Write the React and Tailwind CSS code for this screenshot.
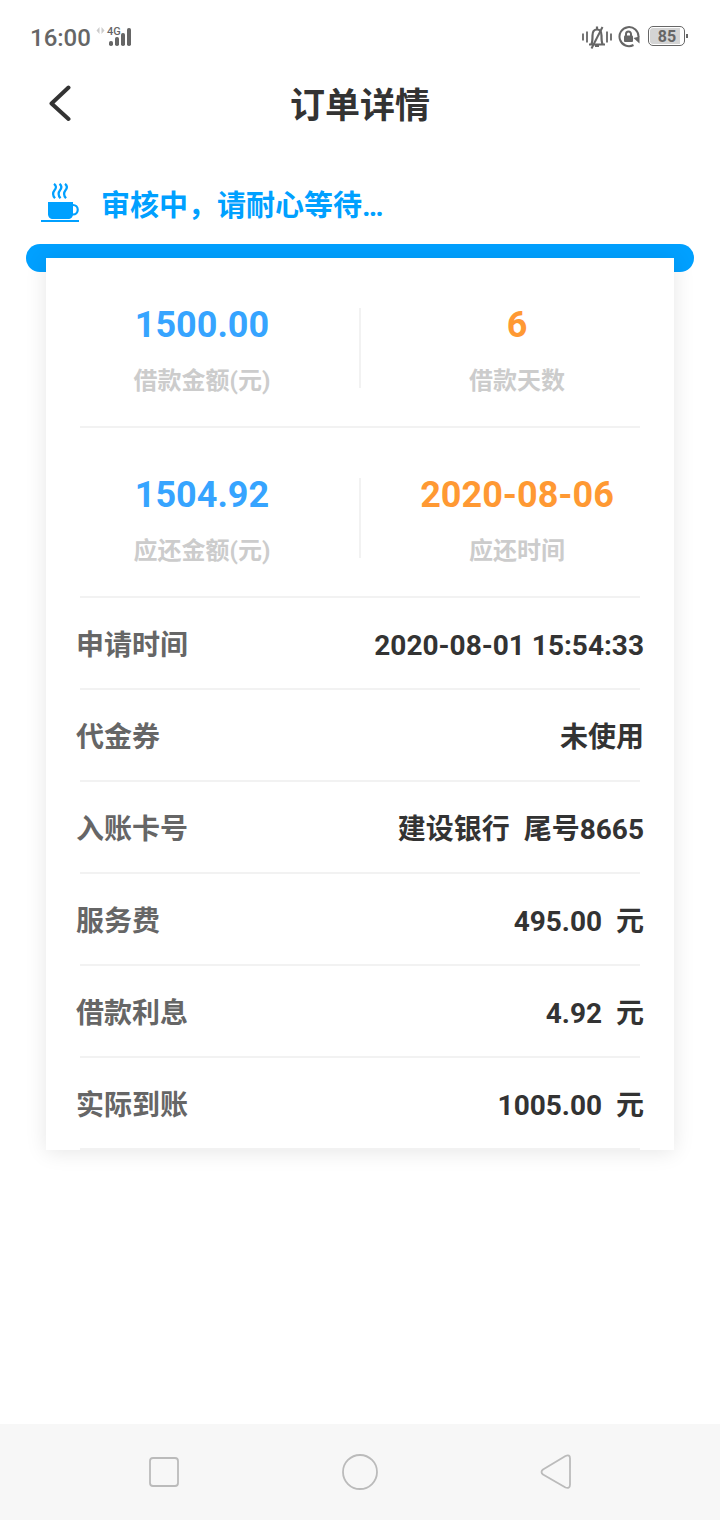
import React from 'react';

const stats = [
  [
    { value: '1500.00', label: '借款金额(元)', color: 'text-[#36a4ff]' },
    { value: '6', label: '借款天数', color: 'text-[#ff9933]' },
  ],
  [
    { value: '1504.92', label: '应还金额(元)', color: 'text-[#36a4ff]' },
    { value: '2020-08-06', label: '应还时间', color: 'text-[#ff9933]' },
  ],
];

const details = [
  { label: '申请时间', value: '2020-08-01 15:54:33' },
  { label: '代金券', value: '未使用' },
  { label: '入账卡号', value: '建设银行\u00a0 尾号8665' },
  { label: '服务费', value: '495.00\u00a0 元' },
  { label: '借款利息', value: '4.92\u00a0 元' },
  { label: '实际到账', value: '1005.00\u00a0 元' },
];

const Divider = () => <hr className="mx-[34px] h-0.5 border-0 bg-[#f2f2f2]" />;

const StatusBar = () => (
  <div className="flex h-[72px] items-center justify-between pl-[30px] pr-8 pt-0.5 text-[#666666]">
    <div className="flex items-center gap-1">
      <span className="pt-0.5 text-2xl font-medium">16:00</span>
      <svg width="37" height="22" viewBox="0 0 37 22" fill="currentColor" aria-label="4G">
        <path d="M4.500 1v7L1.500 4.500zM6.500 1v7l3-3.500z" fill="#cccccc" />
        <text x="12" y="9" fontSize="11" fontWeight="500">4G</text>
        <rect x="14" y="15" width="4" height="5" rx="1.800" />
        <rect x="20" y="11" width="4" height="9" rx="1.800" />
        <rect x="26" y="7" width="4" height="13" rx="1.800" />
        <rect x="32" y="2" width="4" height="18" rx="1.800" />
      </svg>
    </div>
    <div className="flex items-center">
      <svg width="30" height="24" viewBox="0 0 30 24" fill="none" stroke="currentColor" strokeWidth="2">
        <path d="M1 8.500v7M5 6.500v11M25 6.500v11M29 8.500v7" strokeWidth="1.800" />
        <path d="M7 19.500h16M9.500 19c1-2 1-5 1-8.500 0-4 1.500-6 4.500-6s4.500 2 4.500 6c0 3.500 0 6.500 1 8.500M15 1.500V4M13 21h4" strokeWidth="2.200" />
        <path d="M20.500 2 9.500 23.500" />
      </svg>
      <svg className="ml-1.5" width="22" height="22" viewBox="0 0 22 22" fill="none" stroke="currentColor" strokeWidth="2">
        <path d="M15.500 19A9.500 9.500 0 1 1 20.500 11" />
        <path d="m15.500 12 6-1.500v7z" fill="currentColor" stroke="none" />
        <rect x="6" y="9.500" width="9" height="6.500" rx="1" fill="currentColor" stroke="none" />
        <path d="M8 10V8a2.500 2.500 0 0 1 5 0v2" />
      </svg>
      <div className="ml-2 flex items-center gap-px pb-0.5">
        <div className="flex h-5 w-[37px] items-center rounded-[5px] border border-[#666666] p-px">
          <div className="flex h-4 w-[30px] items-center justify-center rounded-l-[3px] bg-[#d4d4d4] pl-1 pt-0.5 text-base font-bold leading-4">
            85
          </div>
        </div>
        <div className="h-1 w-0.5 bg-[#666666]" />
      </div>
    </div>
  </div>
);

const Header = () => (
  <header className="grid h-16 grid-cols-[96px_1fr_96px] items-center">
    <button type="button" aria-label="返回" className="flex justify-center pl-6">
      <svg width="24" height="38" viewBox="0 0 24 38" fill="none" stroke="#333333" strokeWidth="4" strokeLinecap="round" strokeLinejoin="round">
        <path d="M20.500 2.500 3.500 18.500 20.500 34" />
      </svg>
    </button>
    <h1 className="pt-1.5 text-center text-[35px] font-bold leading-10 text-[#333333]">订单详情</h1>
  </header>
);

const CupIcon = () => (
  <svg width="38" height="40" viewBox="0 0 38 40" fill="none" stroke="#00a0ff">
    <path
      d="M13 .8c2.500 2 2.500 4 .5 6.500s-2 5 .5 8M18.500 .8c2.500 2 2.500 4 .5 6.500s-2 5 .5 8M24 .8c2.500 2 2.500 4 .5 6.500s-2 5 .5 8"
      strokeWidth="2.200"
    />
    <path d="M7 19h25v12c0 3-2 5-5 5H12c-3 0-5-2-5-5z" fill="#00a0ff" stroke="none" />
    <path d="M31 22h1a4.500 4.500 0 0 1 0 9.500h-2" strokeWidth="2.200" />
    <path d="M0 38h38" strokeWidth="2" />
  </svg>
);

const StatRow = ({ items }) => (
  <div className="relative grid grid-cols-2 pb-[31px] pt-[46px]">
    {items.map((item) => (
      <div key={item.label} className="flex flex-col items-center gap-[21px] first:pr-0.5">
        <span className={`text-4xl font-bold leading-[42px] ${item.color}`}>{item.value}</span>
        <span className="text-2xl font-bold leading-7 text-[#cccccc]">{item.label}</span>
      </div>
    ))}
    <div className="absolute left-1/2 top-[50px] h-20 w-0.5 -translate-x-1/2 bg-[#f2f2f2]" />
  </div>
);

const DetailRow = ({ item }) => (
  <li>
    <div className="flex h-[90px] items-center justify-between px-[30px] pt-1.5 text-[28px] font-bold leading-10">
      <span className="text-[#666666]">{item.label}</span>
      <span className="whitespace-pre text-[#333333]">{item.value}</span>
    </div>
    <Divider />
  </li>
);

const NavBar = () => (
  <nav className="mt-auto flex h-24 items-center justify-center gap-40 bg-[#f7f7f7]">
    <button type="button" aria-label="最近任务">
      <svg width="36" height="36" viewBox="0 0 36 36" fill="none" stroke="#bbbbbb" strokeWidth="1.800">
        <rect x="4" y="4" width="28" height="28" rx="3" />
      </svg>
    </button>
    <button type="button" aria-label="主页">
      <svg width="36" height="36" viewBox="0 0 36 36" fill="none" stroke="#bbbbbb" strokeWidth="1.800">
        <circle cx="18" cy="18" r="17" />
      </svg>
    </button>
    <button type="button" aria-label="返回上一页">
      <svg width="36" height="36" viewBox="0 0 36 36" fill="none" stroke="#bbbbbb" strokeWidth="1.800" strokeLinejoin="round">
        <path d="M5 15.500 27.500 2Q32 0 32 4.500v26q0 4.500-4.500 3L5 20.500Q2 18 5 15.500z" />
      </svg>
    </button>
  </nav>
);

export default function App() {
  return (
    <div className="flex min-h-screen flex-col bg-white font-['Roboto','Noto_Sans_CJK_SC',sans-serif]">
      <StatusBar />
      <Header />
      <main className="px-[26px] pb-10">
        <div className="flex h-[108px] items-center gap-[22px] pl-[15px] pt-[26px]">
          <CupIcon />
          <p className="pt-1.5 text-[29px] font-bold leading-10 text-[#00a0ff]">审核中，请耐心等待…</p>
        </div>
        <div className="h-7 rounded-full bg-[#00a0ff]" />
        <section className="relative mx-5 -mt-3.5 bg-white shadow-[0_2px_20px_rgba(0,0,0,0.1)]">
          {stats.map((items) => (
            <React.Fragment key={items[0].label}>
              <StatRow items={items} />
              <Divider />
            </React.Fragment>
          ))}
          <ul>
            {details.map((item) => (
              <DetailRow key={item.label} item={item} />
            ))}
          </ul>
        </section>
      </main>
      <NavBar />
    </div>
  );
}
